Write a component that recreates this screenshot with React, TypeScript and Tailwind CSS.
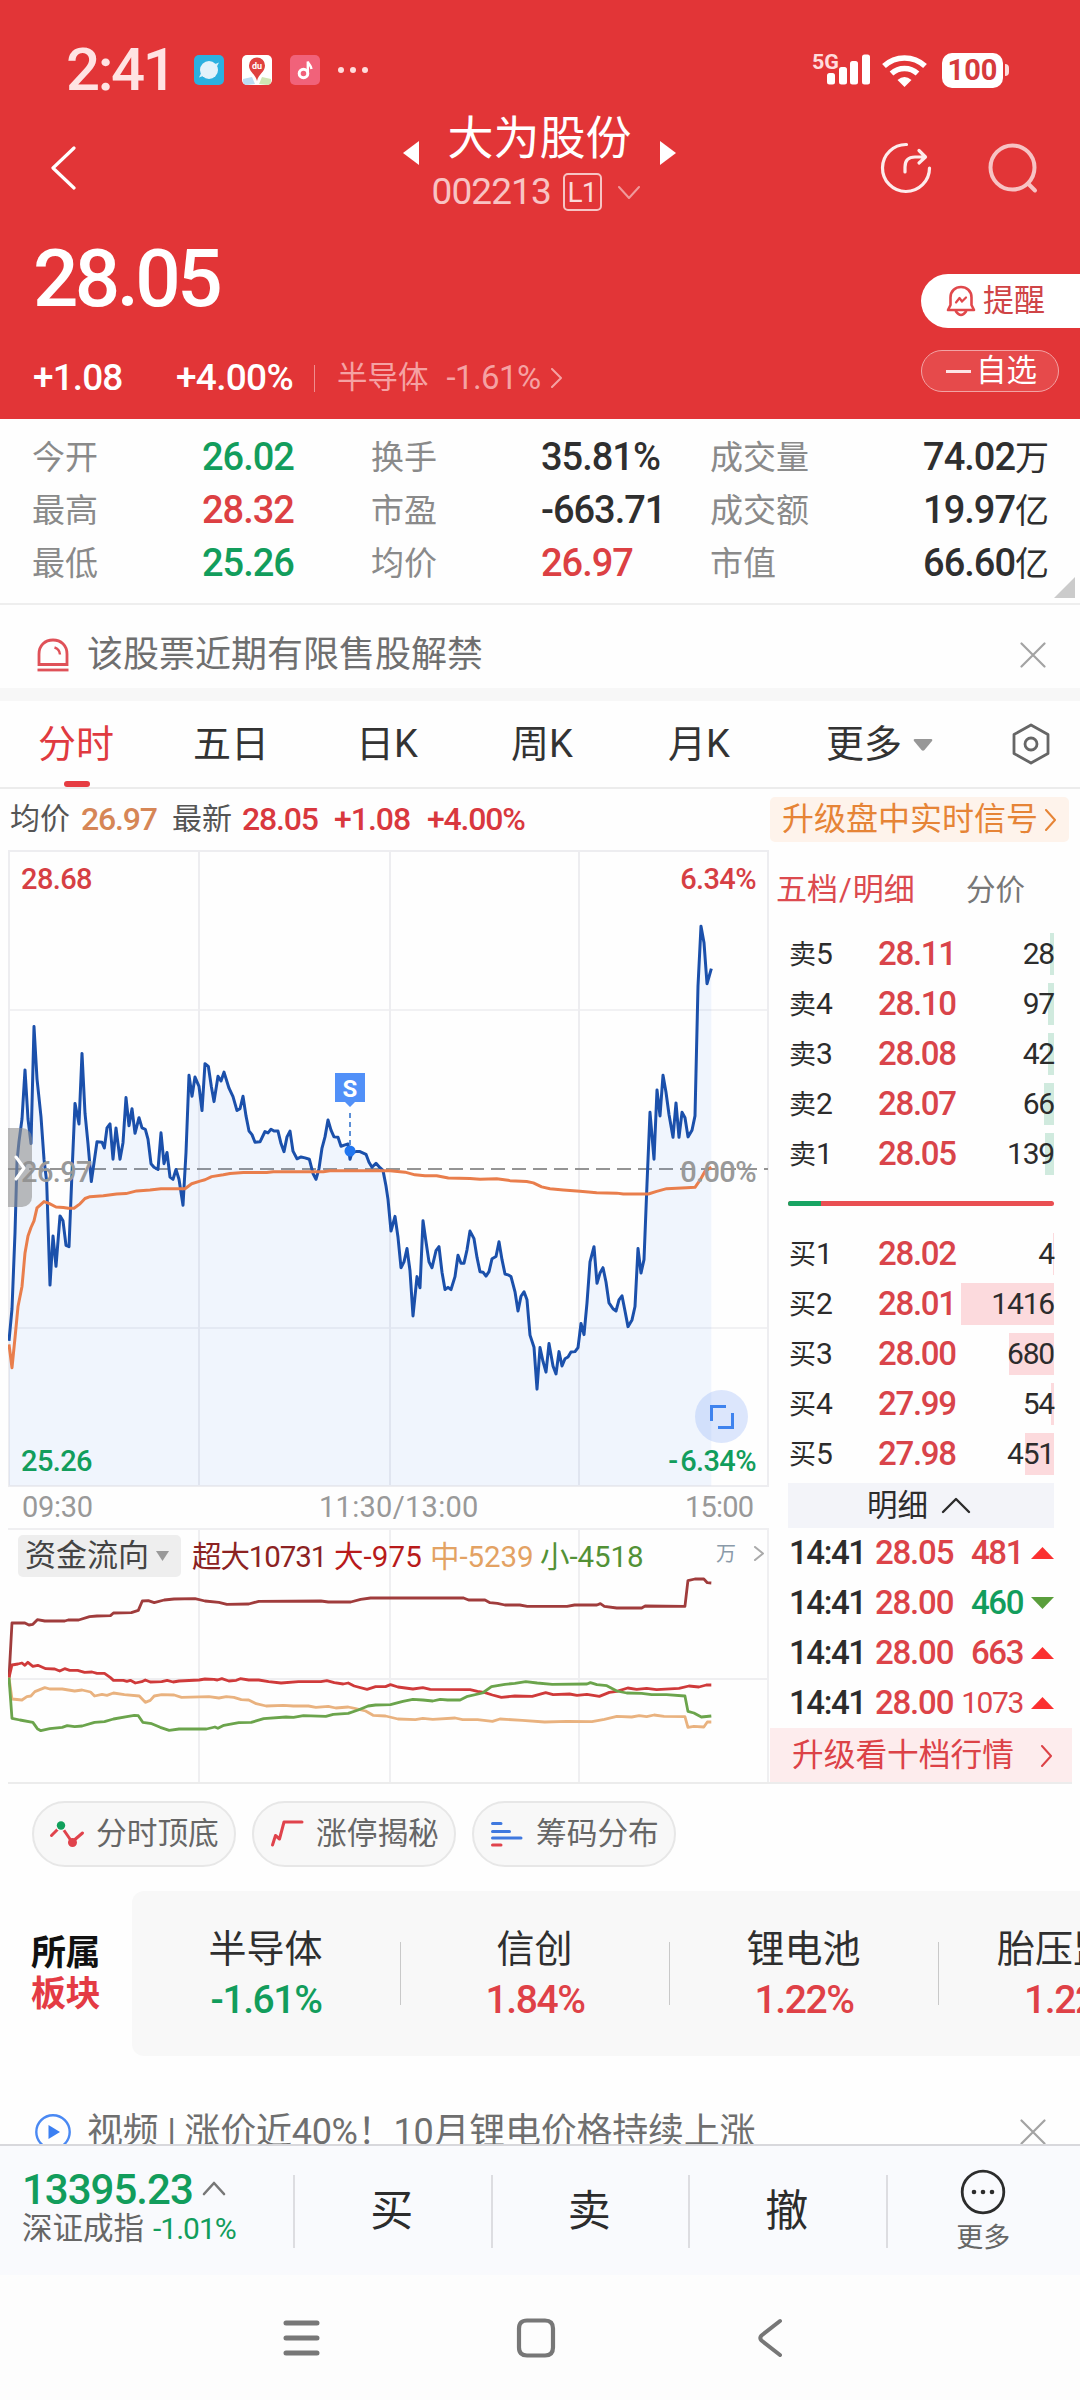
import type { ReactNode } from 'react';

const priceLine =
  '27,1122 36,1050 45,880 51,720 57,675 66,625 75,515 84,625 93,680 102,418 111,535 123,620 132,715 140,765 150,997 159,887 168,955 180,842 189,853 198,908 207,911 216,745 225,590 237,636 246,478 255,612 264,680 274,765 291,676 306,677 313,690 321,645 330,636 339,715 348,645 360,715 369,678 378,577 387,640 396,602 405,657 417,622 426,645 436,648 444,670 453,725 462,733 474,738 483,656 492,725 501,700 510,755 519,760 528,738 537,760 549,818 558,700 567,527 576,574 585,531 597,552 606,606 615,501 625,507 634,552 642,586 654,529 663,540 672,520 687,556 699,575 711,606 720,602 729,574 738,618 747,652 756,660 765,677 780,676 795,653 804,656 813,648 822,652 834,652 843,680 852,698 861,665 870,652 879,697 891,714 903,710 915,712 928,715 939,747 948,760 957,736 966,690 975,665 984,627 993,650 1002,665 1014,666 1023,686 1035,683 1044,681 1050,715 1056,700 1068,698 1080,698 1098,704 1107,722 1116,733 1128,724 1140,734 1149,740 1158,775 1164,805 1173,876 1185,843 1194,890 1203,958 1212,945 1221,915 1230,965 1239,1066 1251,978 1260,1003 1269,853 1278,900 1287,945 1296,958 1308,920 1317,911 1326,968 1335,1007 1344,1002 1353,1007 1365,978 1374,930 1383,948 1392,948 1401,918 1410,876 1422,893 1431,935 1440,967 1449,968 1458,977 1467,967 1476,938 1488,933 1497,900 1506,940 1515,972 1524,974 1533,978 1545,1012 1554,1055 1563,1022 1572,1012 1581,1030 1590,1109 1602,1136 1611,1230 1620,1137 1629,1168 1638,1192 1647,1128 1659,1178 1668,1196 1677,1146 1686,1178 1695,1162 1704,1158 1713,1147 1725,1146 1734,1137 1743,1083 1752,1108 1761,1037 1770,945 1782,911 1791,993 1800,970 1809,958 1818,990 1827,1037 1839,1050 1848,1055 1857,1030 1866,1021 1875,1055 1884,1090 1896,1075 1905,1045 1914,915 1923,970 1932,940 1941,770 1950,610 1962,715 1971,560 1980,618 1989,527 1998,565 2007,615 2019,666 2028,589 2037,666 2046,610 2055,622 2064,665 2076,650 2085,618 2094,327 2103,193 2112,230 2121,322 2134,288';

const avgLine =
  '27,1130 36,1182 45,1115 54,1045 66,1000 75,925 84,887 93,868 102,853 111,824 123,816 132,810 147,814 168,822 190,823 205,825 222,825 240,815 255,803 270,799 310,797 350,793 378,792 410,786 450,784 483,781 555,781 575,770 600,764 615,761 635,754 670,750 690,747 730,745 800,745 820,743 970,743 990,741 1170,741 1215,744 1245,750 1275,752 1310,752 1345,757 1410,758 1440,760 1490,759 1530,763 1580,765 1600,768 1625,777 1650,781 1690,784 1740,787 1790,790 1850,791 1870,793 1945,793 1970,787 2000,781 2060,779 2085,778 2100,762 2115,742 2134,733';

const flows = [
  {
    color: '#a03c3c',
    points:
      '18,533 24,369 50,369 58,375 66,373 75,359 90,363 130,363 137,360 158,360 180,350 195,348 222,347 228,339 264,338 278,331 286,303 298,302 310,308 330,300 350,297 392,296 412,303 440,307 456,313 500,312 520,304 645,303 660,306 705,306 725,298 745,294 932,294 942,300 975,300 985,308 1000,310 1015,315 1045,315 1060,319 1140,319 1155,315 1200,315 1207,311 1215,319 1240,324 1290,324 1297,318 1377,319 1383,242 1397,237 1415,237 1422,248 1430,249',
  },
  {
    color: '#cf3a3a',
    points:
      '18,533 24,495 36,492 44,489 50,496 56,487 66,499 76,496 92,506 110,507 120,513 130,506 140,511 156,511 170,517 185,516 195,520 210,520 222,533 228,541 248,541 255,544 262,541 272,549 285,545 292,540 302,546 325,545 336,541 348,546 360,543 400,540 412,537 430,538 437,540 446,536 460,543 475,541 483,536 500,540 520,540 540,545 565,549 600,545 645,545 657,542 672,548 690,552 700,549 712,558 738,568 755,560 775,560 785,554 800,561 830,567 850,563 865,568 945,569 960,574 975,578 990,585 1008,592 1035,588 1070,589 1097,578 1112,584 1145,582 1160,586 1180,583 1205,589 1225,577 1240,574 1262,564 1280,568 1300,565 1320,569 1365,565 1385,558 1405,561 1420,555 1430,555',
  },
  {
    color: '#e9b27f',
    points:
      '18,533 24,597 44,600 54,590 62,588 70,575 90,563 100,567 125,567 150,573 165,570 182,576 190,588 205,583 215,586 228,579 250,584 280,588 292,607 302,601 310,588 325,584 350,585 365,592 420,590 440,594 455,590 470,592 485,599 500,600 515,611 535,618 570,616 590,618 620,618 635,622 660,619 675,624 700,621 715,626 735,633 750,646 775,648 800,657 835,659 850,655 870,658 915,654 930,659 960,659 990,664 1005,657 1050,661 1095,666 1140,664 1190,665 1215,658 1240,649 1270,651 1285,647 1300,650 1315,645 1335,649 1377,650 1383,682 1395,679 1415,681 1422,666 1430,666',
  },
  {
    color: '#6ba44c',
    points:
      '18,533 24,655 40,660 66,667 75,686 82,692 100,686 125,682 135,677 150,680 165,678 190,667 210,665 228,657 255,650 270,646 278,647 287,667 305,671 322,682 340,691 360,687 415,687 432,681 438,685 450,676 480,668 505,667 530,656 575,651 590,652 610,647 655,649 670,643 700,640 720,630 740,618 755,615 785,614 810,604 830,598 850,600 870,603 885,598 900,600 925,600 940,589 970,579 988,560 1015,553 1035,550 1057,545 1080,549 1110,553 1180,552 1187,548 1200,554 1220,557 1240,573 1260,579 1290,580 1310,584 1340,584 1377,588 1383,634 1395,639 1410,651 1430,648',
  },
];

const stats = [
  ['今开', '26.02', 'g', '换手', '35.81%', 'k', '成交量', '74.02万'],
  ['最高', '28.32', 'r', '市盈', '-663.71', 'k', '成交额', '19.97亿'],
  ['最低', '25.26', 'g', '均价', '26.97', 'r', '市值', '66.60亿'],
];

const tones: Record<string, string> = {
  g: 'text-[#129d5c]',
  r: 'text-[#dc4043]',
  k: 'text-[#2f2f2f]',
};

const asks = [
  { name: '卖5', price: '28.11', qty: '28', bar: 4 },
  { name: '卖4', price: '28.10', qty: '97', bar: 6 },
  { name: '卖3', price: '28.08', qty: '42', bar: 6 },
  { name: '卖2', price: '28.07', qty: '66', bar: 10 },
  { name: '卖1', price: '28.05', qty: '139', bar: 9 },
];

const bids = [
  { name: '买1', price: '28.02', qty: '4', bar: 1 },
  { name: '买2', price: '28.01', qty: '1416', bar: 93 },
  { name: '买3', price: '28.00', qty: '680', bar: 45 },
  { name: '买4', price: '27.99', qty: '54', bar: 3 },
  { name: '买5', price: '27.98', qty: '451', bar: 29 },
];

const trades = [
  { time: '14:41', price: '28.05', qty: '481', up: true },
  { time: '14:41', price: '28.00', qty: '460', up: false },
  { time: '14:41', price: '28.00', qty: '663', up: true },
  { time: '14:41', price: '28.00', qty: '1073', up: true },
];

const sectors = [
  { name: '半导体', pct: '-1.61%', up: false },
  { name: '信创', pct: '1.84%', up: true },
  { name: '锂电池', pct: '1.22%', up: true },
  { name: '胎压监测', pct: '1.22%', up: true },
];

function Chevron({ className, d, w, h, sw = 2 }: { className?: string; d: string; w: number; h: number; sw?: number }) {
  return (
    <svg width={w} height={h} viewBox={`0 0 ${w} ${h}`} fill="none" stroke="currentColor" strokeWidth={sw} strokeLinecap="round" strokeLinejoin="round" className={`shrink-0 ${className ?? ''}`}>
      <path d={d} />
    </svg>
  );
}

function StatusBar() {
  return (
    <div className="flex h-[100px] items-center pt-[40px] pl-[66px] pr-[71px]">
      <span className="w-[128px] text-[60px] font-medium leading-[60px] tracking-[-2.4px] text-[#ffe3e3]">2:41</span>
      <svg width="30" height="30" viewBox="0 0 30 30" className="shrink-0">
        <rect width="30" height="30" rx="5" fill="#2cb0e0" />
        <path d="M5 22.500 9 14 25 7.500 20 17Z" fill="#d8f0fa" />
        <circle cx="15" cy="15" r="9" fill="#e3f2fa" />
      </svg>
      <svg width="30" height="30" viewBox="0 0 30 30" className="ml-[18px] shrink-0">
        <rect width="30" height="30" rx="5" fill="#fff" />
        <path d="M1 24 10 22 13 29 5 30Q1 30 1 26Z" fill="#bcdcf3" />
        <path d="M29 24 20 22 17 29 25 30Q29 30 29 26Z" fill="#cfe6b4" />
        <path d="M15 26C13.500 19 7 17 7 10.500a8 8 0 0 1 16 0C23 17 16.500 19 15 26Z" fill="#e0413f" />
        <text x="15" y="14" textAnchor="middle" fontSize="9" fontWeight="700" fill="#fff">du</text>
      </svg>
      <svg width="30" height="30" viewBox="0 0 30 30" className="ml-[18px] shrink-0">
        <rect width="30" height="30" rx="5" fill="#f1627a" />
        <circle cx="13.500" cy="18.500" r="4.300" fill="none" stroke="#fff" strokeWidth="3" />
        <path d="M17.800 18.500V6.500C18.500 9.500 21 10 21.500 14" fill="none" stroke="#fff" strokeWidth="2.400" />
      </svg>
      <div className="ml-[18px] flex gap-1.5">
        <i className="size-1.5 rounded-full bg-[#ffdcdc]" />
        <i className="size-1.5 rounded-full bg-[#ffdcdc]" />
        <i className="size-1.5 rounded-full bg-[#ffdcdc]" />
      </div>
      <div className="ml-auto flex items-center text-white">
        <svg width="62" height="34" viewBox="0 0 62 34" className="overflow-visible">
          <text x="0" y="15.500" fontSize="21" fontWeight="700" fill="#ffdcdc" textLength="27" lengthAdjust="spacingAndGlyphs">5G</text>
          <rect x="15" y="20" width="8" height="11.500" rx="2.500" fill="#fff" />
          <rect x="27" y="14" width="8" height="17.500" rx="2.500" fill="#fff" />
          <rect x="38" y="8" width="8" height="23.500" rx="2.500" fill="#fff" />
          <rect x="50" y="1.500" width="8" height="30" rx="2.500" fill="#fff" />
        </svg>
        <svg width="46" height="33" viewBox="0 0 46 33" className="ml-[8px]">
          <path d="M2 12a30 30 0 0 1 41 0" fill="none" stroke="#fff" strokeWidth="5.500" />
          <path d="M9.500 19.500a19.500 19.500 0 0 1 26 0" fill="none" stroke="#fff" strokeWidth="5.500" />
          <path d="M15.500 26q7-6 14 0L22.500 33Z" fill="#fff" />
        </svg>
        <div className="ml-[14px] h-[35px] w-[61px] rounded-[10px] bg-white text-center text-[29px] font-bold leading-[35px] text-[#d63a3c]">100</div>
        <i className="ml-[2px] h-[12px] w-[4px] rounded-r-full bg-[#ffdcdc]" />
      </div>
    </div>
  );
}

function Header() {
  return (
    <header className="h-[419px] bg-[#e23537] text-white">
      <StatusBar />
      <div className="flex h-[136px] items-start">
        <Chevron className="ml-[50px] mt-[46px]" w={27} h={44} sw={3.2} d="M24 2 3 22 24 42" />
        <div className="ml-[326px] flex w-[273px] justify-between">
          <svg width="16" height="24" viewBox="0 0 16 24" className="mt-[41px]"><path d="M16 0V24L0 12Z" fill="#fff" /></svg>
          <div className="w-[224px] pt-[11px]">
            <h1 className="text-center text-[46px] font-normal leading-[54px]">大为股份</h1>
            <div className="ml-1 flex h-[54px] items-center">
              <span className="w-[131px] text-[37px] leading-[54px] tracking-[-0.9px] text-[#f8c3c3]">002213</span>
              <span className="h-[38px] w-[39px] shrink-0 rounded-[5px] border-2 border-[#f6c4c4] text-center text-[28px] leading-[35px] tracking-[-1px] text-[#fbd9d9]">L1</span>
              <Chevron className="ml-[16px] text-[#f09a9b]" w={22} h={13} d="M1 1 11 12 21 1" />
            </div>
          </div>
          <svg width="16" height="24" viewBox="0 0 16 24" className="mt-[41px]"><path d="M0 0V24L16 12Z" fill="#fff" /></svg>
        </div>
        <svg width="52" height="52" viewBox="0 0 52 52" fill="none" stroke="#fdecec" strokeWidth="3.200" strokeLinecap="round" strokeLinejoin="round" className="ml-[204px] mt-[42px] shrink-0">
          <path d="M26.500 2.500A23.500 23.500 0 1 0 49.500 26" />
          <path d="M25 30V25Q25 15 35 15H45M39 8.500 45.500 15 39 21" />
        </svg>
        <svg width="52" height="52" viewBox="0 0 52 52" fill="none" stroke="#f7c3c4" strokeWidth="4" strokeLinecap="round" className="ml-[56px] mt-[42px] shrink-0">
          <circle cx="24.500" cy="25.500" r="22" />
          <path d="M40.500 42 47 48.500" />
        </svg>
      </div>
      <div className="flex justify-between">
        <div className="pl-[33px]">
          <div className="text-[80px] font-medium leading-[86px] tracking-[-3.600px]">28.05</div>
          <div className="mt-[36px] flex h-10 items-center text-[37px] leading-10">
            <span className="w-[143px] font-medium tracking-[-0.9px]">+1.08</span>
            <span className="w-[138px] font-medium tracking-[-0.7px]">+4.00%</span>
            <i className="h-[27px] w-px bg-[#f08d8e]" />
            <span className="ml-[22px] text-[30.500px] text-[#f5a2a3]">半导体</span>
            <span className="ml-[18px] w-[97px] text-[33px] tracking-[-0.6px] text-[#f5a2a3]">-1.61%</span>
            <Chevron className="ml-[6px] text-[#f5a2a3]" w={13} h={20} d="M2 1 11 10 2 19" />
          </div>
        </div>
        <div className="flex w-[159px] flex-col pt-[38px]">
          <button className="flex h-[54px] items-center rounded-l-full bg-white pl-[25px] text-[31px] text-[#cf4446]">
            <svg width="30" height="32" viewBox="0 0 30 32" fill="none" stroke="#e0484b" strokeWidth="2.600" strokeLinejoin="round" strokeLinecap="round">
              <path d="M2 25H28L25.500 20V12.500C25.500 6 20.500 2 15 2S4.500 6 4.500 12.500V20Z" />
              <path d="M10 26.500Q15 33.500 20 26.500" />
              <path d="M10 17.500 13.500 13 16 16.500 20 12.500" strokeWidth="2.200" />
            </svg>
            <span className="ml-[7px]">提醒</span>
          </button>
          <button className="mt-[22px] flex h-[42px] w-[138px] items-center rounded-full border border-[#f2a3a4] bg-[#e64a4b] pl-[24px] text-[30.500px] leading-[40px]">
            <i className="h-[3px] w-[25px] bg-[#fde5e5]" />
            <span className="ml-[5px]">自选</span>
          </button>
        </div>
      </div>
    </header>
  );
}

function Stats() {
  return (
    <section className="relative h-[184px] pt-[12px]">
      {stats.map(([a, av, at, b, bv, bt, c, cv]) => (
        <div key={a} className="flex h-[53px] items-center pl-[32px] pr-[32px] text-[38px] leading-[53px]">
          <span className="w-[170px] text-[33px] text-[#8a8a8a]">{a}</span>
          <span className={`w-[169px] font-medium tracking-[-1px] ${tones[at]}`}>{av}</span>
          <span className="w-[170px] text-[33px] text-[#8a8a8a]">{b}</span>
          <span className={`w-[169px] font-medium tracking-[-1px] ${tones[bt]}`}>{bv}</span>
          <span className="text-[33px] text-[#8a8a8a]">{c}</span>
          <span className="ml-auto font-medium tracking-[-1px] text-[#2f2f2f]">{cv.slice(0, -1)}<span className="text-[34px] font-normal">{cv.slice(-1)}</span></span>
        </div>
      ))}
      <svg width="21" height="21" viewBox="0 0 21 21" className="absolute bottom-[5px] right-[5px]"><path d="M21 0V21H0Z" fill="#cbcbcb" /></svg>
    </section>
  );
}

function CloseIcon() {
  return <Chevron className="text-[#a3a3a3]" w={26} h={26} sw={2.2} d="M1.500 1.500 24.500 24.500M24.500 1.500 1.500 24.500" />;
}

function Notice() {
  return (
    <section className="flex h-[85px] items-center border-t-2 border-[#eeeeee] pl-[36px] pr-[34px] pt-[16px]">
      <svg width="34" height="34" viewBox="0 0 34 34" fill="none" stroke="#df5158" strokeWidth="2.800" className="shrink-0">
        <path d="M3 26.500V16C3 7.500 9 2 17 2S31 7.500 31 16V26.500Z" />
        <path d="M1.500 32H32.500" />
        <path d="M18.500 9.500Q23.500 11 24 16.500" strokeWidth="2.400" />
      </svg>
      <span className="ml-[17px] mr-auto text-[36px] leading-[50px] text-[#6f6f6f]">该股票近期有限售股解禁</span>
      <CloseIcon />
    </section>
  );
}

function Tabs() {
  return (
    <nav className="flex h-[88px] items-center border-b-2 border-[#ececec] pl-[38px] text-[38px] leading-[84px] text-[#333333]">
      <div className="relative w-[155px] text-[#e03a40]">
        分时
        <i className="absolute -bottom-px left-[26px] h-[6px] w-[26px] rounded-[3px] bg-[#e63c42]" />
      </div>
      <div className="w-[163px]">五日</div>
      <div className="w-[155px]">日K</div>
      <div className="w-[157px]">周K</div>
      <div className="w-[158px]">月K</div>
      <div className="flex items-center">
        更多
        <svg width="20" height="12" viewBox="0 0 20 12" className="ml-[11px] mt-[2px]"><path d="M2 0H18Q20 0 19 2L11.500 11Q10 12.500 8.500 11L1 2Q0 0 2 0Z" fill="#979797" /></svg>
      </div>
      <svg width="40" height="42" viewBox="0 0 40 42" fill="none" stroke="#666" strokeWidth="2.800" strokeLinejoin="round" className="ml-[78px]">
        <path d="M20 2 37 11.500V30.500L20 40 3 30.500V11.500Z" />
        <circle cx="20" cy="21" r="6" />
      </svg>
    </nav>
  );
}

function InfoRow() {
  return (
    <div className="flex h-[61px] items-center pl-[10px] pr-[11px] pb-[2px] text-[32px] font-medium leading-[58px] text-[#d9383e]">
      <span className="w-[71px] text-[30px] font-normal text-[#555555]">均价</span>
      <span className="w-[91px] tracking-[-1.200px] text-[#d68656]">26.97</span>
      <span className="w-[70px] text-[30px] font-normal text-[#555555]">最新</span>
      <span className="w-[92px] tracking-[-1.200px]">28.05</span>
      <span className="w-[93px] tracking-[-1px]">+1.08</span>
      <span className="tracking-[-1.200px]">+4.00%</span>
      <div className="ml-auto mt-[2px] flex h-[45px] w-[299px] items-center rounded-[5px] bg-[#fef3eb] pl-[12px] text-[32px] font-normal leading-[43px] text-[#e68436]">
        升级盘中实时信号
        <Chevron className="ml-[6px]" w={13} h={22} d="M2 1 11 11 2 21" />
      </div>
    </div>
  );
}

function Label({ className, children }: { className: string; children: ReactNode }) {
  return <span className={`absolute text-[29px] font-medium leading-[30px] tracking-[-0.600px] ${className}`}>{children}</span>;
}

function PriceChart() {
  return (
    <div className="relative h-[637px]">
      <svg width="761" height="637" className="block">
        <g fill="none" stroke="#ededf0" strokeWidth="2">
          <path d="M0 1H761M1 0V636M191 0V636M382 0V636M571 0V636M760 0V636M0 636H761" />
          <path d="M0 160H760M0 478H760" strokeWidth="1.500" />
        </g>
        <path d="M0 319H760" stroke="#949494" strokeWidth="2" strokeDasharray="14 7" />
        <svg width="760" height="636" viewBox="24 22.400 2280 1424.600" preserveAspectRatio="none">
          <polygon points={`27,1446 ${priceLine} 2134,1446`} fill="#4a86f0" fillOpacity="0.08" />
          <polyline points={priceLine} fill="none" stroke="#1b50ab" strokeWidth="3" strokeLinejoin="round" vectorEffect="non-scaling-stroke" />
          <polyline points={avgLine} fill="none" stroke="#e97e4c" strokeWidth="3" strokeLinejoin="round" vectorEffect="non-scaling-stroke" />
        </svg>
        <path d="M342 263V300" stroke="#5c8fd6" strokeWidth="2" strokeDasharray="5 4" />
        <circle cx="342" cy="301" r="5.500" fill="#2176f0" />
        <path d="M327 223H357V252H347L342 257 337 252H327Z" fill="#5190f8" />
        <text x="342" y="246.500" textAnchor="middle" fontSize="24" fontWeight="700" fill="#fff">S</text>
      </svg>
      <Label className="left-[13px] top-[14px] text-[#d63f44]">28.68</Label>
      <Label className="right-[13px] top-[14px] text-[#d63f44]">6.34%</Label>
      <Label className="left-[13px] top-[307px] text-[#999]">26.97</Label>
      <Label className="right-[13px] top-[307px] text-[#999]">0.00%</Label>
      <Label className="left-[13px] top-[596px] text-[#129d5c]">25.26</Label>
      <Label className="right-[13px] top-[596px] text-[#129d5c]"><span className="tracking-[2px]">-</span>6.34%</Label>
      <div className="absolute left-0 top-[278px] flex h-[79px] w-[24px] items-center justify-center rounded-r-[10px] bg-[#909090]/60 text-white">
        <Chevron w={12} h={26} sw={3} d="M2 2 10 13 2 24" />
      </div>
      <div className="absolute bottom-[44px] right-[21px] flex size-[53px] items-center justify-center rounded-full bg-[#8eb0f8]/30">
        <svg width="26" height="26" viewBox="0 0 26 26" fill="none" stroke="#3f83ee" strokeWidth="3"><path d="M17 2.500H2.500V17M9 23.500H23.500V9" /></svg>
      </div>
    </div>
  );
}

function FlowChart() {
  return (
    <div className="relative h-[256px]">
      <svg width="761" height="256" className="absolute inset-0">
        <path d="M0 1H761M191 0V254M382 0V254M571 0V254M760 0V254M0 151H760" fill="none" stroke="#efeff1" strokeWidth="2" />
        <svg width="760" height="256" viewBox="16 84 1528 768" preserveAspectRatio="none">
          {flows.map((f) => (
            <polyline key={f.color} points={f.points} fill="none" stroke={f.color} strokeWidth="2.800" strokeLinejoin="round" vectorEffect="non-scaling-stroke" />
          ))}
        </svg>
      </svg>
      <div className="relative flex items-center whitespace-nowrap pl-[10px] pt-[6px] text-[29.500px] leading-[42px]">
        <div className="flex h-[42px] w-[163px] items-center rounded-[5px] bg-[#eeeeee] pl-[7px] text-[31px] text-[#444]">
          资金流向
          <svg width="13" height="10" viewBox="0 0 13 10" className="ml-[7px]"><path d="M0 0H13L6.500 10Z" fill="#999" /></svg>
        </div>
        <span className="ml-[11px] w-[142px] pt-[2px] tracking-[-1.100px] text-[#8c2222]">超大10731</span>
        <span className="w-[96px] pt-[2px] tracking-[0.1px] text-[#b81a1a]">大-975</span>
        <span className="w-[110px] pt-[2px] tracking-[-0.1px] text-[#e3a263]">中-5239</span>
        <span className="w-[176px] pt-[2px] tracking-[-0.1px] text-[#529136]">小-4518</span>
        <span className="-mt-[5px] text-[20px] text-[#8a9aa9]">万</span>
        <Chevron className="-mt-[5px] ml-[17px] text-[#aaa]" w={12} h={15} d="M2 1 10 7.500 2 14" />
      </div>
    </div>
  );
}

function BookRow({ row, barColor }: { row: (typeof asks)[number]; barColor: string }) {
  return (
    <div className="relative flex h-[50px] items-center pl-[1px] text-[#2c2c2c]">
      <i className={`absolute right-0 top-[4px] h-[42px] ${barColor}`} style={{ width: row.bar }} />
      <span className="relative w-[89px] text-[30px] leading-[50px]"><span className="text-[27px]">{row.name[0]}</span>{row.name[1]}</span>
      <span className="relative text-[33px] font-medium leading-[50px] tracking-[-1.300px] text-[#d9444a]">{row.price}</span>
      <span className="relative ml-auto text-[30px] leading-[50px] tracking-[-1.200px]">{row.qty}</span>
    </div>
  );
}

function OrderBook() {
  return (
    <aside className="flex w-[303px] flex-col">
      <div className="flex h-[79px] items-center pl-[7px] text-[31px] text-[#dc4a4f]">
        <span className="w-[190px] pt-px">五档<span className="px-px">/</span>明细</span>
        <span className="pt-px text-[29.500px] text-[#777]">分价</span>
      </div>
      <div className="ml-[19px] w-[266px] self-start">
        {asks.map((r) => <BookRow key={r.name} row={r} barColor="bg-[#d0eade]" />)}
        <div className="flex h-[50px] items-center pb-px">
          <div className="flex h-[5px] w-full overflow-hidden rounded-full bg-[#e94f52]"><i className="w-[33px] bg-[#17a463]" /></div>
        </div>
        {bids.map((r) => <BookRow key={r.name} row={r} barColor="bg-[#fcdadd]" />)}
        <div className="mt-[4px] flex h-[45px] items-center justify-center bg-[#f3f4f9] pr-[4px] text-[30.500px] leading-[45px] text-[#2c2c2c]">
          明细
          <Chevron className="ml-[13px]" w={30} h={17} sw={2.400} d="M2 15 15 2 28 15" />
        </div>
        {trades.map((t, i) => (
          <div key={i} className="flex h-[50px] items-center pl-px text-[33px] leading-[50px] tracking-[-1.400px] text-[#dc4348]">
            <span className="w-[86px] font-medium text-[#2c2c2c]">{t.time}</span>
            <span className="w-[80px] font-medium tracking-[-1.200px]">{t.price}</span>
            <span className={`flex-1 text-right ${t.qty.length > 3 ? 'text-[30px]' : 'font-medium'} ${t.up ? '' : 'text-[#129d5c]'}`}>{t.qty}</span>
            <svg width="23" height="12" viewBox="0 0 23 12" className="ml-[8px] shrink-0">
              {t.up ? <path d="M0 12H23L11.500 0Z" fill="#fb3030" /> : <path d="M0 0H23L11.500 12Z" fill="#5a9e3c" />}
            </svg>
          </div>
        ))}
      </div>
      <div className="ml-[1px] mt-auto flex h-[54px] items-center bg-[#fdeced] pl-[22px] pt-px text-[31.700px] text-[#dc4247]">
        升级看十档行情
        <Chevron className="ml-[26px]" w={13} h={22} d="M2 1 11 11 2 21" />
      </div>
    </aside>
  );
}

function Chip({ children, label }: { children: ReactNode; label: string }) {
  return (
    <button className="flex h-[66px] w-[204px] items-center rounded-full border-2 border-[#e7e7e7] bg-[#f8f8f8] pl-[15px] text-[30.700px] text-[#666]">
      <svg width="36" height="32" viewBox="0 0 36 32" fill="none" strokeWidth="3" strokeLinecap="round" strokeLinejoin="round">{children}</svg>
      <span className="ml-[11px] whitespace-nowrap pt-px">{label}</span>
    </button>
  );
}

function Chips() {
  return (
    <div className="flex gap-4 pl-[32px] pt-[17px]">
      <Chip label="分时顶底">
        <path d="M2.500 17.500 12 8 23 24 33.500 15" stroke="#e0434c" />
        <circle cx="12" cy="7.500" r="5.500" fill="#f8f8f8" />
        <circle cx="12" cy="7.500" r="4.200" fill="#12a05c" />
        <circle cx="23.500" cy="24.500" r="4.500" fill="#e0434c" />
      </Chip>
      <Chip label="涨停揭秘">
        <path d="M3.500 27 6.500 17.500 10.500 21 15 4H33" stroke="#e0434c" />
      </Chip>
      <Chip label="筹码分布">
        <path d="M3.500 5.500H12M3.500 13.500H20.500M3.500 20H32" stroke="#4079df" />
        <path d="M3.500 27H12" stroke="#e0434c" />
      </Chip>
    </div>
  );
}

function Sectors() {
  return (
    <section className="mt-[24px] flex h-[165px]">
      <div className="flex w-[131px] flex-col items-center justify-center pt-px text-[35px] font-bold leading-[41px] tracking-[-0.5px]">
        <span className="text-[#111]">所属</span>
        <span className="text-[#e43b44]">板块</span>
      </div>
      <div className="ml-px flex flex-1 items-center overflow-hidden rounded-l-[12px] bg-[#f8f8f8]">
        {sectors.map((s, i) => (
          <div key={s.name} className={`flex h-[63px] w-[269px] shrink-0 flex-col items-center justify-center border-[#c9c9c9] pt-[2px] ${i < 3 ? 'border-r' : ''}`}>
            <span className="-ml-px text-[38px] leading-[51px] text-[#2f2f2f]">{s.name}</span>
            <span className={`text-[39px] font-medium leading-[51px] tracking-[-1.400px] ${s.up ? 'text-[#df4147]' : 'text-[#129d5c]'}`}>{s.pct}</span>
          </div>
        ))}
      </div>
    </section>
  );
}

function News() {
  return (
    <section className="mt-[48px] h-[40px] overflow-hidden">
      <div className="flex h-[56px] items-center pl-[34px] pr-[34px]">
        <svg width="38" height="38" viewBox="0 0 38 38" className="shrink-0">
          <circle cx="19" cy="19" r="16.700" fill="none" stroke="#4a89f3" strokeWidth="2.400" />
          <path d="M14.500 12 26 19 14.500 26Z" fill="#3b7ff2" />
        </svg>
        <span className="ml-[15px] mr-auto whitespace-pre text-[36px] leading-[56px] tracking-[-0.25px] text-[#6f6f6f]">视频 | 涨价近40%！10月锂电价格持续上涨</span>
        <CloseIcon />
      </div>
    </section>
  );
}

function BottomBar() {
  return (
    <footer className="flex h-[131px] items-center border-t-2 border-[#d8d8dc] bg-[#f9fafd] pt-px">
      <div className="w-[293px] pb-[6px] pl-[22px]">
        <div className="flex h-[42px] items-center text-[42px] leading-[42px] tracking-[-1px] text-[#129d5c]">
          <span className="w-[180px] font-medium">13395.23</span>
          <Chevron className="mb-[4px] text-[#777]" w={24} h={15} sw={2.600} d="M2 13 12 2 22 13" />
        </div>
        <div className="flex h-[36px] items-center text-[30.500px] leading-[36px] text-[#666]">
          <span className="w-[131px]">深证成指</span>
          <span className="text-[30px] tracking-[-1px] text-[#129d5c]">-1.01%</span>
        </div>
      </div>
      {['买', '卖', '撤'].map((t) => (
        <div key={t} className="flex h-[73px] w-[197.500px] items-center justify-center border-l-2 border-[#dddde1] pr-[2px] text-[43px] text-[#2c2c2c]">{t}</div>
      ))}
      <div className="flex h-[73px] flex-1 flex-col items-center justify-center border-l-2 border-[#dddde1] pr-px pt-[2px] text-[27px] leading-[34px] text-[#666]">
        <svg width="46" height="46" viewBox="0 0 46 46" fill="#2c2c2c" className="shrink-0">
          <circle cx="23" cy="23" r="20.800" fill="none" stroke="#2c2c2c" strokeWidth="2.800" />
          <circle cx="14" cy="23" r="2.300" />
          <circle cx="23" cy="23" r="2.300" />
          <circle cx="32" cy="23" r="2.300" />
        </svg>
        <span className="mt-[6px]">更多</span>
      </div>
    </footer>
  );
}

function SystemNav() {
  return (
    <div className="flex h-[125px] items-center bg-[#fdfdfd] text-[#777777]">
      <Chevron className="ml-[281px]" w={42} h={40} sw={5} d="M5 5H36M5 20H36M5 35H36" />
      <Chevron className="ml-[192px]" w={42} h={42} sw={4.200} d="M12 3.500H30Q38 3.500 38 11.500V30.500Q38 38.500 30 38.500H12Q4 38.500 4 30.500V11.500Q4 3.500 12 3.500Z" />
      <Chevron className="ml-[199px]" w={28} h={42} sw={4} d="M24 4 5.500 18.500Q3 21 5.500 23.500L24 38" />
    </div>
  );
}

export default function App() {
  return (
    <div className="h-[2400px] w-[1080px] overflow-hidden bg-[#fefefe] font-[Roboto,'Noto_Sans_CJK_SC',sans-serif]">
      <Header />
      <Stats />
      <Notice />
      <div className="h-[13px] bg-[#f7f7f7]" />
      <Tabs />
      <InfoRow />
      <div className="mx-[8px] flex h-[934px] border-b-2 border-[#ececec]">
        <div className="w-[761px]">
          <PriceChart />
          <div className="flex h-[41px] items-center pl-[14px] text-[29px] leading-[43px] text-[#999]">
            <span className="w-[297px] tracking-[-0.3px]">09:30</span>
            <span className="w-[366px] tracking-[0.3px]">11:30/13:00</span>
            <span className="tracking-[-0.8px]">15:00</span>
          </div>
          <FlowChart />
        </div>
        <OrderBook />
      </div>
      <Chips />
      <Sectors />
      <News />
      <BottomBar />
      <SystemNav />
    </div>
  );
}
